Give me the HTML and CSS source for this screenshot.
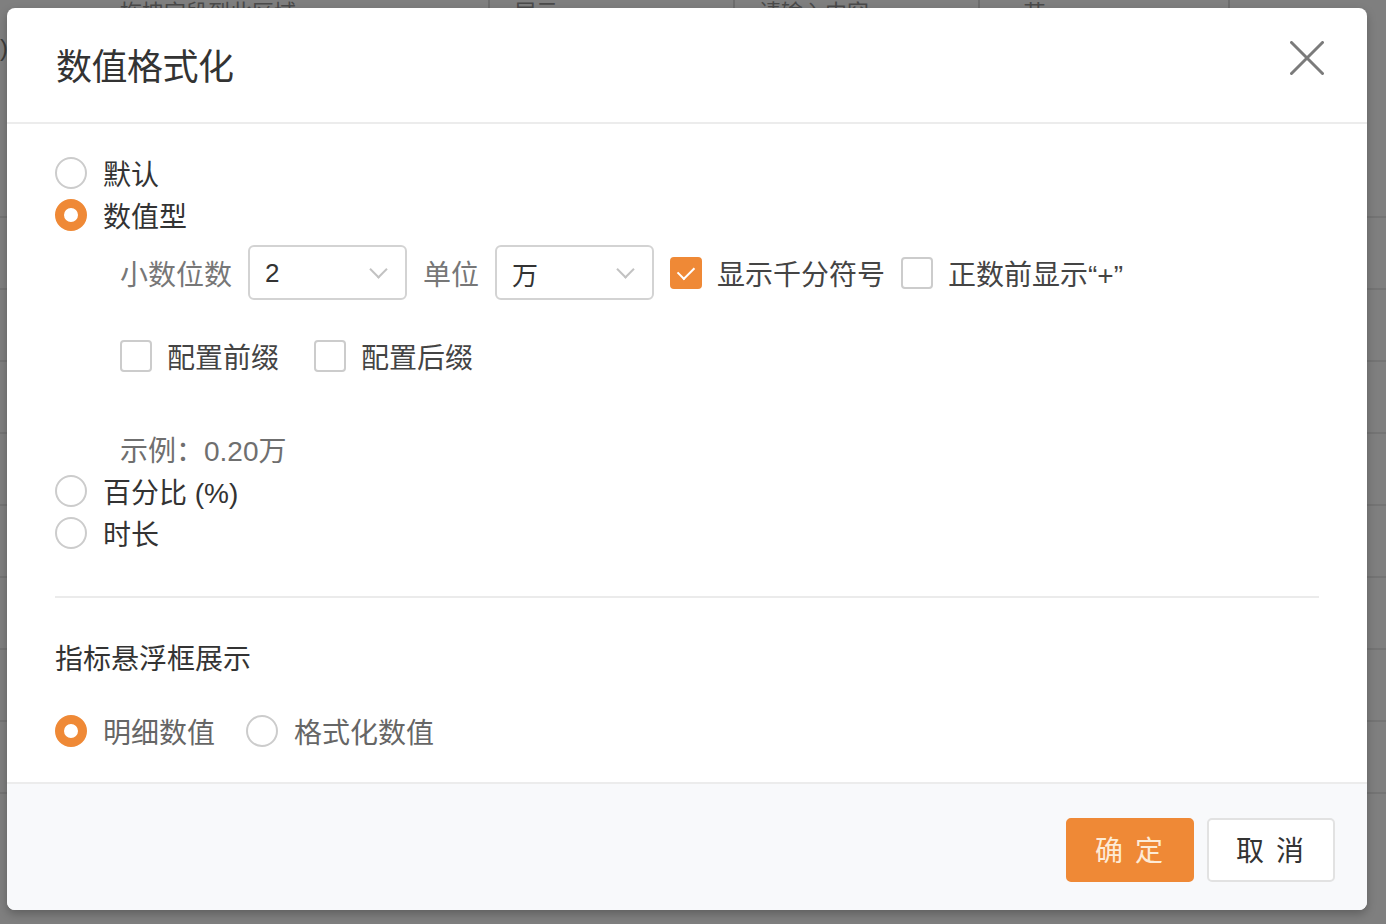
FILE: index.html
```html
<!DOCTYPE html>
<html>

<head lang="zh-CN">
    <meta charset="UTF-8">
    <title>数值格式化</title>
    <link rel="stylesheet" href="styles.css">
</head>

<body>
    <!-- 背后的页面（被遮盖层压暗） -->
    <div class="page">
        <div class="page-toolbar">
            <span class="tb-cell tb-wide">拖拽字段到此区域</span>
            <span class="tb-cell tb-mid">展示</span>
            <span class="tb-cell tb-mid">请输入内容</span>
            <span class="tb-cell">○ 节</span>
        </div>
        <div class="page-side">)</div>
        <div class="page-rows">
            <div class="page-row"></div>
            <div class="page-row"></div>
            <div class="page-row"></div>
            <div class="page-row"></div>
            <div class="page-row"></div>
            <div class="page-row"></div>
            <div class="page-row"></div>
            <div class="page-row"></div>
            <div class="page-row"></div>
        </div>
    </div>

    <div class="dialog">
        <div class="dialog-header">
            <div class="dialog-title">数值格式化</div>
            <a class="dialog-close" href="javascript:;">
                <svg width="34" height="34" viewBox="0 0 34 34">
                    <path d="M1.5 1.5 L32.5 32.5 M32.5 1.5 L1.5 32.5" stroke="#7b7b7b" stroke-width="3" fill="none" stroke-linecap="round" />
                </svg>
            </a>
        </div>

        <div class="dialog-body">
            <div class="radio-item"><span class="radio"></span>默认</div>
            <div class="radio-item"><span class="radio checked"></span>数值型</div>

            <div class="sub-options">
                <div class="opt-row">
                    <span class="opt-label">小数位数</span>
                    <div class="select"><span>2</span><i class="chevron"></i></div>
                    <span class="opt-label">单位</span>
                    <div class="select"><span>万</span><i class="chevron"></i></div>
                    <label class="check-item"><span class="checkbox checked"></span>显示千分符号</label>
                    <label class="check-item"><span class="checkbox"></span>正数前显示“+”</label>
                </div>
                <div class="opt-row opt-row2">
                    <label class="check-item"><span class="checkbox"></span>配置前缀</label>
                    <label class="check-item"><span class="checkbox"></span>配置后缀</label>
                </div>
                <div class="example">示例：0.20万</div>
            </div>

            <div class="radio-item"><span class="radio"></span>百分比 (%)</div>
            <div class="radio-item"><span class="radio"></span>时长</div>

            <div class="divider"></div>

            <div class="section-title">指标悬浮框展示</div>
            <div class="radio-inline">
                <div class="radio-item gray"><span class="radio checked"></span>明细数值</div>
                <div class="radio-item gray"><span class="radio"></span>格式化数值</div>
            </div>
        </div>

        <div class="dialog-footer">
            <a class="btn btn-primary" href="javascript:;">确 定</a>
            <a class="btn" href="javascript:;">取 消</a>
        </div>
    </div>
</body>

</html>
```

FILE: styles.css
```css
* {
    box-sizing: border-box;
}

body {
    margin: 0;
    padding: 0;
    width: 1386px;
    height: 924px;
    overflow: hidden;
    background: #7f7f7f;
    font-family: "Helvetica Neue", "Liberation Sans", "Noto Sans CJK SC", sans-serif;
    color: #333333;
}

a {
    text-decoration: none;
    color: #333333;
}

/* 背后页面 */
.page {
    width: 100%;
    height: 100%;
    position: relative;
}

.page-toolbar {
    display: flex;
    height: 26px;
    font-size: 22px;
    line-height: 26px;
    color: #4a4a4a;
}

.tb-cell {
    padding-left: 24px;
    border-right: 2px solid #6d6d6d;
    width: 250px;
}

.tb-wide {
    width: 490px;
    padding-left: 120px;
}

.tb-mid {
    width: 245px;
}

.page-side {
    position: absolute;
    left: 0px;
    top: 34px;
    font-size: 24px;
    color: #3c3c3c;
}

.page-rows {
    margin-top: 190px;
}

.page-row {
    height: 72px;
    border-top: 2px solid #747474;
}

/* 弹框 */
.dialog {
    position: absolute;
    left: 7px;
    top: 8px;
    width: 1360px;
    height: 902px;
    background: #ffffff;
    border-radius: 8px;
    box-shadow: 0px 4px 10px rgba(0, 0, 0, .25);
    overflow: hidden;
    display: flex;
    flex-direction: column;
}

.dialog-header {
    height: 116px;
    flex-shrink: 0;
    display: flex;
    align-items: center;
    justify-content: space-between;
    padding: 5px 43px 0px 49px;
    border-bottom: 2px solid #ececec;
}

.dialog-title {
    font-size: 36px;
    line-height: 44px;
    color: #333333;
    letter-spacing: -0.5px;
}

.dialog-close {
    display: block;
    width: 34px;
    height: 34px;
    align-self: flex-start;
    margin-top: 28px;
}

.dialog-close svg {
    display: block;
}

.dialog-body {
    flex: 1;
    padding: 28px 48px 0px 48px;
}

.radio-item {
    display: flex;
    align-items: center;
    height: 42px;
    font-size: 28px;
    color: #333333;
}

.radio-item.gray {
    color: #666666;
}

.radio {
    width: 32px;
    height: 32px;
    border-radius: 50%;
    border: 2px solid #cccccc;
    background: #ffffff;
    margin-right: 16px;
    flex-shrink: 0;
}

.radio.checked {
    border: 9px solid #ef8936;
}

.sub-options {
    padding-left: 65px;
}

.opt-row {
    display: flex;
    align-items: center;
    gap: 16px;
    margin-top: 9px;
    height: 55px;
    font-size: 28px;
}

.opt-row2 {
    gap: 35px;
    margin-top: 40px;
    height: 32px;
}

.opt-label {
    color: #777777;
}

.select {
    width: 159px;
    height: 55px;
    border: 2px solid #d3d3d3;
    border-radius: 6px;
    display: flex;
    align-items: center;
    justify-content: space-between;
    padding: 2px 20px 0px 15px;
    color: #333333;
    font-size: 26px;
}

.chevron {
    width: 13px;
    height: 13px;
    border-right: 2px solid #c2c2c2;
    border-bottom: 2px solid #c2c2c2;
    transform: rotate(45deg);
    margin-top: -8px;
}

.check-item {
    display: flex;
    align-items: center;
    color: #444444;
}

.checkbox {
    width: 32px;
    height: 32px;
    border: 2px solid #cccccc;
    border-radius: 4px;
    margin-right: 15px;
    position: relative;
    flex-shrink: 0;
}

.checkbox.checked {
    background: #ef8936;
    border-color: #ef8936;
}

.checkbox.checked::after {
    content: "";
    position: absolute;
    left: 9px;
    top: 4px;
    width: 8px;
    height: 14px;
    border-right: 2px solid #ffffff;
    border-bottom: 2px solid #ffffff;
    transform: rotate(45deg);
}

.example {
    height: 42px;
    line-height: 42px;
    margin-top: 56px;
    padding-top: 3px;
    font-size: 28px;
    color: #6f6f6f;
}

.divider {
    height: 2px;
    background: #ebebeb;
    margin: 42px 0px 0px 0px;
}

.section-title {
    font-size: 28px;
    line-height: 42px;
    height: 42px;
    margin-top: 41px;
    color: #333333;
}

.radio-inline {
    display: flex;
    gap: 31px;
    margin-top: 29px;
}

.dialog-footer {
    height: 128px;
    flex-shrink: 0;
    background: #f8f9fb;
    border-top: 2px solid #ececec;
    display: flex;
    justify-content: flex-end;
    gap: 13px;
    padding: 34px 32px 0px 0px;
}

.btn {
    width: 128px;
    height: 64px;
    line-height: 64px;
    text-align: center;
    font-size: 28px;
    border: 2px solid #e2e2e2;
    border-radius: 5px;
    background: #ffffff;
    color: #333333;
    letter-spacing: 2px;
}

.btn-primary {
    background: #ef8936;
    border-color: #ef8936;
    color: #fdebd6;
}
```
